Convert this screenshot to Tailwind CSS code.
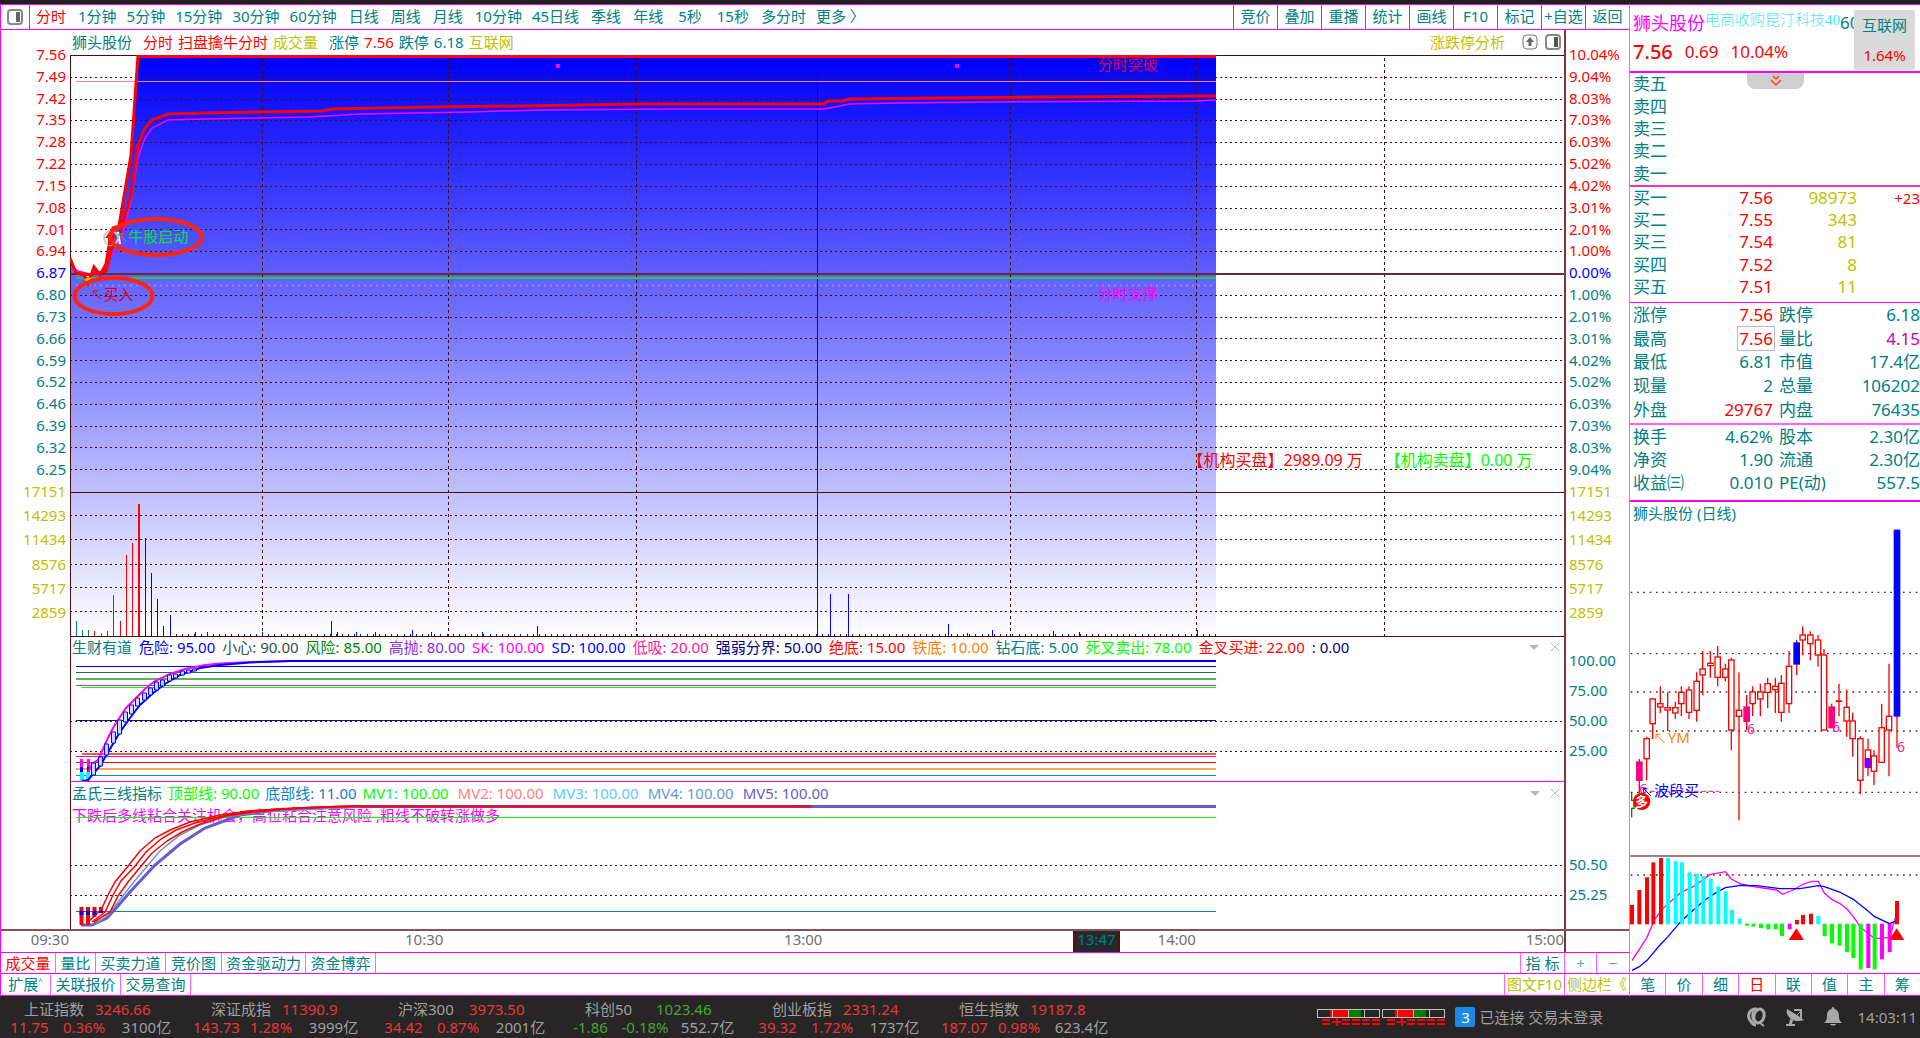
<!DOCTYPE html>
<html lang="zh-CN">
<head>
<meta charset="utf-8">
<meta name="viewport" content="width=device-width, initial-scale=1">
<title>狮头股份 分时</title>
<script src="https://cdn.jsdelivr.net/npm/@tailwindcss/browser@4"></script>
</head>
<body class="min-h-screen flex flex-col bg-white font-['Noto_Sans','Noto_Sans_CJK_SC',sans-serif] text-[15px] leading-[20px] text-[#008080] whitespace-nowrap overflow-x-hidden">
<div class="h-1 bg-[#1f1f1f]"></div>

<div class="flex items-stretch">
  <!-- chart side -->
  <main class="flex-1 min-w-0 flex flex-col border-l border-[#ff00ff] ">
    <nav class="h-[26px] flex items-stretch border-y border-[#ff00ff]" aria-label="周期">
      <button class="w-[29px] flex items-center justify-center border-r border-[#ff00ff]" aria-label="侧栏">
        <svg class="size-4" viewBox="0 0 16 16" fill="none"><rect x="1" y="1" width="14" height="14" rx="3" stroke="#888" stroke-width="2"/><rect x="9" y="3" width="4" height="10" fill="#666"/></svg>
      </button>
      <div class="flex items-center gap-3 pl-[6px] pb-[2px]">
        <button class="text-[#ff0000]">分时</button>
        <div class="flex gap-[10px]"><button>1分钟</button><button>5分钟</button><button>15分钟</button><button>30分钟</button><button>60分钟</button></div>
        <button>日线</button><button>周线</button><button>月线</button>
        <div class="flex gap-[10px]"><button>10分钟</button><button>45日线</button></div>
        <button>季线</button>
        <div class="flex gap-[15px]"><button>年线</button><button>5秒</button><button>15秒</button></div>
        <div class="flex gap-[10px]"><button>多分时</button><button>更多 〉</button></div>
      </div>
      <div class="ml-auto flex [&>button]:w-11 [&>button]:pb-[2px] [&>button]:border-l [&>button]:border-[#ff00ff] [&>button]:text-center">
        <button>竞价</button><button>叠加</button><button>重播</button><button>统计</button><button>画线</button><button>F10</button><button>标记</button><button>+自选</button><button>返回</button>
      </div>
    </nav>

    <section class="flex h-[899px]">
      <!-- left axis -->
      <div class="w-[69px] pt-[14px] pr-1 text-right">
        <div id="priceAxis" class="h-[435px] flex flex-col justify-between"></div>
        <div class="mt-[2px] h-[141px] flex flex-col justify-between text-[#c0c000]"><span>17151</span><span>14293</span><span>11434</span><span>8576</span><span>5717</span><span>2859</span></div>
      </div>

      <div class="flex-1 min-w-0 flex flex-col border-r-2 border-[#7a3838]">
        <div class="h-[25px] flex items-center gap-[5px] pl-[2px] pr-[3px] pb-[2px]">
          <span>狮头股份</span><span class="ml-[6px] text-[#ff0000]">分时</span><span class="text-[#ff0000]">扫盘擒牛分时</span><span class="text-[#c0c000]">成交量</span>
          <span class="ml-[6px]">涨停</span><span class="text-[#ff0000]">7.56</span><span>跌停</span><span>6.18</span><span class="text-[#c0c000]">互联网</span>
          <a href="#" class="ml-auto text-[#c0c000]">涨跌停分析</a>
          <button class="ml-3" aria-label="上移"><svg class="size-4" viewBox="0 0 16 16" fill="none"><rect x="1" y="1" width="14" height="14" rx="4" stroke="#777"/><path d="M8 3 12 8H9.500v4h-3V8H4z" fill="#666"/></svg></button>
          <button class="ml-[2px]" aria-label="侧栏"><svg class="size-4" viewBox="0 0 16 16" fill="none"><rect x="1" y="1" width="14" height="14" rx="3" stroke="#888" stroke-width="2"/><rect x="9" y="3" width="4" height="10" fill="#555"/></svg></button>
        </div>

        <!-- price and volume -->
        <div class="relative h-[581px]">
          <svg id="pricePane" class="block w-full h-full [&_*]:[vector-effect:non-scaling-stroke]" viewBox="70 55 1494 581" preserveAspectRatio="none" fill="none">
            <defs><linearGradient id="sky" gradientUnits="userSpaceOnUse" x1="0" y1="60" x2="0" y2="636"><stop offset="0" stop-color="#0000ff"/><stop offset="1" stop-color="#ffffff"/></linearGradient></defs>
            <path fill="url(#sky)" d="M70 258 76 275 86 276 88 284 94 268 100 276 106 264 111 233 119 225 121 214 131 155 138 55H1216V636H70Z"/>
            <g id="grid" stroke="#4a0a0a" shape-rendering="crispEdges"></g>
            <path stroke="#6b2a3a" stroke-width="2" d="M70 274H1565" shape-rendering="crispEdges"/>
            <path stroke="#22cc44" stroke-width="2" d="M76 278H1216" shape-rendering="crispEdges"/>
            <path stroke="#a080ff" stroke-width="2" stroke-dasharray="2 4" d="M76 285.500H1216"/>
            <path stroke="#ff8090" d="M76 81.500H1216" shape-rendering="crispEdges"/>
            <path stroke="#ff0020" stroke-width="3" d="M138 56.500H1216"/>
            <g id="volume" shape-rendering="crispEdges"></g>
            <path stroke="#ff00ff" stroke-width="1.500" d="M74 268 78 271 90 274 105 272 112 255 119 250 131 200 138 157 145 138 152 128 168 120 205 119 260 118 310 117 360 114 470 112 540 110 670 109 824 109 840 106 849 104 900 103 990 102 1195 101 1216 100"/>
            <path stroke="#ff0000" stroke-width="3" d="M76 273 90 275 106 271 112 248 118 240 125 215 131 195 138 145 145 128 152 120 168 114 205 113 260 112 322 111 332 109 432 107 520 106 640 104 824 104 828 101 842 101 849 99 945 98 1050 97 1216 96"/>
            <path stroke="#ff0000" stroke-width="3" d="M70 258 76 273 84 275 88 284 94 267 100 275 106 264 111 233 113 228 119 226 121 214 131 155 138 55"/>
            <circle cx="111" cy="238" r="7" stroke="#ccc" stroke-width="2"/><path fill="#ff0000" d="M111 230 117 238H114V245H108V238H105Z"/><path d="m118 232 2 12" stroke="#fff" stroke-width="2"/>
            <path d="m84 279 4 5 4-7z" fill="#cc0" /><path stroke="#22cc44" d="m126 241-8-7m0 5v-5h5"/>
            <path stroke="#e00020" d="m101 299-8-8m0 5v-5h5"/>
            <ellipse cx="156" cy="237" rx="46" ry="18" stroke="#ff2410" stroke-width="4"/>
            <ellipse cx="113.500" cy="296" rx="39" ry="18" stroke="#ff2410" stroke-width="4"/>
            <path fill="#ff00ff" d="M556 64h4v4h-4zM955 64h4v4h-4z"/>
          </svg>
          <span class="absolute left-[3.900%] top-[171px] text-[#00e040]">牛股启动</span>
          <span class="absolute left-[2.250%] top-[229px] text-[#e00020]">买入</span>
          <span class="absolute left-[68.800%] top-[-1px] text-[#e00030]">分时突破</span>
          <span class="absolute left-[68.800%] top-[228px] text-[#ff00ff]">分时支撑</span>
          <span class="absolute left-[74.800%] top-[395px] text-[16px] text-[#ff0000]">【机构买盘】2989.09 万</span>
          <span class="absolute left-[88%] top-[395px] text-[16px] text-[#00ff00]">【机构卖盘】0.00 万</span>
        </div>

        <!-- indicator 1 -->
        <div class="relative h-[145px] border-l border-[#5a0f0f]">
          <svg class="absolute inset-0 w-full h-full [&_*]:[vector-effect:non-scaling-stroke]" viewBox="71 636 1493 145" preserveAspectRatio="none" fill="none">
            <g stroke="#4a0a0a" shape-rendering="crispEdges"><path d="M70 636.500H1565"/><path stroke-dasharray="2 3" d="M70 721.500H1565M70 751.500H1565"/></g>
            <g shape-rendering="crispEdges">
              <path stroke="#0000ff" d="M76 666.500H1216"/><path stroke="#2f6060" d="M76 672.500H1216"/><path stroke="#5fb05f" stroke-width="2" d="M76 679H1216"/>
              <path stroke="#a040f0" d="M76 685.500H1216"/><path stroke="#00ff00" d="M82 687.500H1216"/><path stroke="#101080" d="M76 720.500H1216"/>
              <path stroke="#ff5050" stroke-width="2" d="M82 754H1216"/><path stroke="#ff1493" d="M76 756.500H1216"/><path stroke="#ff0000" d="M76 762.500H1216"/>
              <path stroke="#ffa850" stroke-width="2" d="M76 769H1216"/><path stroke="#209090" d="M76 775.500H1216"/>
              <path stroke="#0000ff" stroke-width="2" d="M288 661H1216"/>
              <path stroke="#ff00ff" stroke-width="3" d="M81.500 759V767M88 759V767"/><path stroke="#0000ff" stroke-width="3" d="M81.500 767V772M88 767V772"/><path stroke="#00ffff" stroke-width="4" d="M81.500 772V781M88 772V781"/>
            </g>
            <path stroke="#ff00ff" stroke-width="2" d="M88 772 93 763 98 760 107 740 113 728 120 717 126 708 135 699 145 689 155 681 170 674 185 669 205 665 220 663.500 250 662 290 661"/>
            <path stroke="#0000ff" stroke-width="2" d="M82 781 88 780 100 766 110 749 120 732 130 718 140 705 152 694 165 684 180 675 200 668 220 665 250 662.500 290 661"/>
            <g id="boxes" stroke="#0000ff" fill="#c8d8ff"></g>
          </svg>
          <div class="relative h-6 flex items-center gap-[7px] pl-px pr-1 pb-[2px]">
            <span>生财有道</span><span class="text-[#0000ff]">危险: 95.00</span><span class="text-[#2f4f4f]">小心: 90.00</span><span class="text-[#008000]">风险: 85.00</span><span class="text-[#8a2be2]">高抛: 80.00</span><span class="text-[#ff00ff]">SK: 100.00</span><span class="text-[#0000ff]">SD: 100.00</span><span class="text-[#ff1493]">低吸: 20.00</span><span class="text-[#000080]">强弱分界: 50.00</span><span class="text-[#ff0000]">绝底: 15.00</span><span class="text-[#ff8000]">铁底: 10.00</span><span>钻石底: 5.00</span><span class="text-[#00ff00]">死叉卖出: 78.00</span><span class="text-[#ff0000]">金叉买进: 22.00</span><span class="text-[#000080]">: 0.00</span>
            <button class="ml-auto" aria-label="菜单"><svg class="w-[10px] h-[10px]" viewBox="0 0 10 10"><path fill="#b8b8b8" d="M0 3h10L5 8z"/></svg></button>
            <button class="ml-1" aria-label="关闭"><svg class="w-[10px] h-[10px]" viewBox="0 0 10 10"><path stroke="#b8b8b8" d="m1 1 8 8m0-8L1 9"/></svg></button>
          </div>
        </div>

        <!-- indicator 2 -->
        <div class="relative h-[148px] border-l border-t border-l-[#5a0f0f] border-t-[#ff00ff]">
          <div class="relative h-6 flex items-center gap-[6px] pl-px pr-1 pb-[2px]">
            <span>孟氏三线指标</span><span class="text-[#00ff00]">顶部线: 90.00</span><span class="text-[#1080c0]">底部线: 11.00</span>
            <div class="flex gap-[9px]"><span class="text-[#00ff00]">MV1: 100.00</span><span class="text-[#ff8080]">MV2: 100.00</span><span class="text-[#60c8ff]">MV3: 100.00</span><span class="text-[#6699cc]">MV4: 100.00</span><span class="text-[#6a5acd]">MV5: 100.00</span></div>
            <button class="ml-auto" aria-label="菜单"><svg class="w-[10px] h-[10px]" viewBox="0 0 10 10"><path fill="#b8b8b8" d="M0 3h10L5 8z"/></svg></button>
            <button class="ml-1" aria-label="关闭"><svg class="w-[10px] h-[10px]" viewBox="0 0 10 10"><path stroke="#b8b8b8" d="m1 1 8 8m0-8L1 9"/></svg></button>
          </div>
          <p class="-mt-px pl-px text-[#ff00ff]">下跌后多线粘合关注机会，高位粘合注意风险 ,粗线不破转涨做多</p>
          <svg class="absolute inset-0 w-full h-full [&_*]:[vector-effect:non-scaling-stroke]" viewBox="71 782 1493 147" preserveAspectRatio="none" fill="none">
            <g shape-rendering="crispEdges"><path stroke="#4a0a0a" stroke-dasharray="2 3" d="M70 865.500H1565M70 895.500H1565"/>
            <path stroke="#00ff00" d="M76 817.500H1216"/><path stroke="#1080b0" d="M76 911.500H1216"/></g>
            <path stroke="#6a5acd" stroke-width="3" d="M81 925H92L107 918 117 907 130 892 155 865 180 844 205 828 240 815 270 811 310 808 360 806.500H1216"/>
            <path stroke="#6699cc" stroke-width="1.500" d="M96 924 108 915 118 902 137 878 149 864 160 851 180 835 200 825 225 817 260 812 300 810 360 807"/>
            <path stroke="#ff0000" stroke-width="1.500" d="M88 922 101 910 108 895 115 882 129 865 140 851 155 838 170 830 190 822 220 815 250 811 300 808 360 806"/>
            <path stroke="#ff0000" stroke-width="1.500" d="M92 922 105 912 113 895 121 881 136 865 146 852 161 839 176 830 195 823 222 816 252 811 300 808"/>
            <path stroke="#ff0000" stroke-width="1.500" d="M94 922 110 912 118 896 128 882 142 865 152 853 167 841 182 832 200 824 226 816 254 812 300 808"/>
            <path stroke="#ff0000" stroke-width="2" d="M240 812 280 809 340 806.500H811"/>
            <path stroke="#00ff00" d="m88 920 8-9"/>
            <g stroke-width="4"><path stroke="#ff0000" d="M81.500 907V925M88 907V925M94.500 907V917M101 907V913"/><path stroke="#0000ff" d="M81.500 911V915M88 911V915M94.500 911V915M101 911V913"/></g>
          </svg>
        </div>
      </div>

      <!-- right axis -->
      <div class="w-[63px] pt-[14px] pl-[3px]">
        <div id="pctAxis" class="h-[435px] flex flex-col justify-between"></div>
        <div class="mt-[2px] h-[141px] flex flex-col justify-between text-[#c0c000]"><span>17151</span><span>14293</span><span>11434</span><span>8576</span><span>5717</span><span>2859</span></div>
        <div class="mt-[28px] h-[110px] flex flex-col justify-between"><span>100.00</span><span>75.00</span><span>50.00</span><span>25.00</span></div>
        <div class="mt-[94px] h-[50px] flex flex-col justify-between"><span>50.50</span><span>25.25</span></div>
      </div>
    </section>

    <!-- time axis -->
    <div class="h-[23px] flex border-t-2 border-[#8a5050] text-[#6e6e6e] leading-[17px]">
      <div class="relative flex-1 border-r-2 border-[#7a3838]">
        <span class="absolute left-[1.900%]">09:30</span><span class="absolute left-[25.850%]">10:30</span><span class="absolute left-[50.100%]">13:00</span>
        <span class="absolute left-[68.600%] h-[21px] px-[2px] bg-[#25292f] border-x-2 border-[#5a0f0f] text-[#008080]">13:47</span>
        <span class="absolute left-[74%]">14:00</span><span class="absolute right-0">15:00</span>
      </div>
      <div class="w-[63px]"></div>
    </div>

    <div class="h-[21px] flex border-t border-[#ff00ff] [&>button]:border-r [&>button]:border-[#ff60ff]">
      <button class="w-[55px] text-[#ff0000]">成交量</button><button class="w-10">量比</button><button class="w-[70px]">买卖力道</button><button class="w-14">竞价图</button><button class="w-[84px]">资金驱动力</button><button class="w-[70px]">资金博弈</button>
      <button class="ml-auto w-[45px] border-l">指 标</button><button class="w-8 text-[#60a0a0]">+</button><button class="w-8 text-[#60a0a0] border-r-0!">−</button>
    </div>
    <div class="h-[23px] flex border-y border-[#ff00ff] [&>button]:pb-px [&>button]:border-r [&>button]:border-[#ff60ff]">
      <button class="w-[50px]">扩展˄</button><button class="w-[70px]">关联报价</button><button class="w-[70px]">交易查询</button>
      <button class="ml-auto w-[61px] border-l text-[#c0c000]">图文F10</button><button class="w-16 pl-[2px] text-left border-r-0! text-[#c0c000] overflow-hidden">侧边栏《</button>
    </div>
  </main>

  <!-- quote side -->
  <aside class="w-[291px] shrink-0 flex flex-col border-l border-[#ff60ff] overflow-hidden">
    <header class="relative h-[69px] border-t border-b-2 border-[#ff00ff] pl-[3px]">
      <div class="h-[35px] flex items-center overflow-hidden"><h1 class="text-[18px] text-[#ff00ff]">狮头股份</h1><span class="pb-[6px] font-['Liberation_Serif','Noto_Sans_CJK_SC',serif] font-light text-[#40e8f8]">电商收购昆汀科技40</span><span class="text-[17px]">60</span></div>
      <div class="flex items-center gap-3 text-[17px] text-[#ff0000] leading-6"><b class="text-[20px] font-medium">7.56</b><span>0.69</span><span>10.04%</span></div>
      <a href="#" class="absolute right-[5px] top-[5px] w-[61px] h-[60px] bg-[#dadada] flex flex-col items-center justify-between pt-[5px] pb-[5px]"><span>互联网</span><span class="text-[#ff0000]">1.64%</span></a>
    </header>
    <div class="relative h-[114px] border-b-2 border-[#ff30b0] text-[17px]">
      <table class="w-full h-full"><tbody><tr><th class="font-normal text-left pl-[3px]">卖五</th></tr><tr><th class="font-normal text-left pl-[3px]">卖四</th></tr><tr><th class="font-normal text-left pl-[3px]">卖三</th></tr><tr><th class="font-normal text-left pl-[3px]">卖二</th></tr><tr><th class="font-normal text-left pl-[3px]">卖一</th></tr></tbody></table>
      <button class="absolute left-[117px] top-0 w-[57px] h-4 rounded-b-lg bg-[#cfcfcf] flex justify-center pt-[2px]" aria-label="展开"><svg class="w-3 h-3" viewBox="0 0 12 12" fill="none" stroke="#ff4040" stroke-width="1.500"><path d="m3 1 3 3 3-3M1 5l5 5 5-5"/></svg></button>
    </div>
    <div class="h-[116px] pb-1 border-b border-[#ff00ff] text-[17px]">
      <table id="bids" class="w-full h-full table-fixed"></table>
    </div>
    <div class="h-[122px] pb-px border-b-2 border-[#ff60ff] text-[17px]"><table id="statsA" class="w-full h-full table-fixed"></table></div>
    <div class="h-[77px] pb-[5px] border-b-2 border-[#ff00ff] text-[17px]"><table id="statsB" class="w-full h-full table-fixed"></table></div>
    <div class="relative h-[353px]">
      <h2 class="absolute left-[3px] top-[1px]">狮头股份 (日线)</h2>
      <svg id="daily" class="block w-full h-full" viewBox="90 7 870 1059" preserveAspectRatio="none" fill="none"></svg>
    </div>
    <div class="h-[118px]">
      <svg id="macd" class="block w-full h-full" viewBox="390 75 870 354" preserveAspectRatio="none" fill="none"></svg>
    </div>
    <nav class="h-[23px] flex border-y border-[#ff00ff] [&>button]:flex-1 [&>button]:pb-px [&>button]:border-r [&>button]:border-[#ff60ff]">
      <button>笔</button><button>价</button><button>细</button><button class="text-[#ff0000]">日</button><button>联</button><button>值</button><button>主</button><button class="border-r-0!">筹</button>
    </nav>
  </aside>
</div>

<footer class="flex-1 min-h-[42px] flex items-center bg-[#272525] text-[#a0a0a0]">
  <div id="indices" class="flex h-[42px] pt-1 leading-[18px]"></div>
  <div class="ml-auto flex items-center">
    <svg class="w-[129px] h-[18px] mr-[9px]" viewBox="0 0 129 18" fill="none" shape-rendering="crispEdges">
      <g id="sig"><path fill="#ff0000" d="M13 2h18v7H13z"/><path fill="#008000" d="M31 2h13v7H31z"/><path stroke="#c0c0c0" d="M.5 1.500h62v8H.5zM15.500 2v7M31.500 2v7M47.500 2v7"/><path stroke="#ff0000" stroke-width="2" d="M5 12h8M5 16h8M25 12h8M25 16h8M35 12h8M35 16h8M45 12h8M45 16h8M55 12h8M55 16h8M19.500 10v8M15 14h9"/></g>
      <use href="#sig" x="65"/>
    </svg>
    <span class="size-5 rounded-xs bg-[#1e88e5] text-white text-center">3</span>
    <span class="ml-1 w-[268px]">已连接 交易未登录</span>
    <button aria-label="客服"><svg class="size-5" viewBox="0 0 20 20" fill="none" stroke="#a8a8a8"><ellipse cx="12" cy="9" rx="5" ry="7" stroke-width="3" transform="rotate(15 12 9)"/><path d="M10 2C2 1 0 9 3 13c2 3 3 5 6 5" stroke-width="3"/><path d="M7 3C4 8 5 13 9 16" stroke-width="2"/><path d="m13 16 4 3" stroke-width="2"/></svg></button>
    <button class="ml-[18px]" aria-label="信号"><svg class="size-5" viewBox="0 0 20 20" fill="#a8a8a8"><path d="M2 2C0 9 8 17 19 13L12 8z"/><path d="M5 12 4 17H1v2h9v-2H7l1-4zM9 2h8v9h-2V4H9z"/><path d="m12 8 4-4" stroke="#a8a8a8"/></svg></button>
    <button class="ml-[18px]" aria-label="通知"><svg class="size-5" viewBox="0 0 20 20" fill="#a8a8a8"><path d="M10 0c1 0 1.500.8 1.500 2C15 3 16 6 16 9c0 4 1 5 3 7H1c2-2 3-3 3-7 0-3 1-6 4.500-7C8.500.8 9 0 10 0zM7 17h6c0 2-6 2-6 0z"/></svg></button>
    <time class="ml-[14px] mr-[3px]">14:03:11</time>
  </div>
</footer>

<script>
const $ = id => document.getElementById(id);
const NS = '#ff0000', TEAL = '#008080';

// axis labels
const prices = '7.56 7.49 7.42 7.35 7.28 7.22 7.15 7.08 7.01 6.94 6.87 6.80 6.73 6.66 6.59 6.52 6.46 6.39 6.32 6.25'.split(' ');
const pcts = '10.04 9.04 8.03 7.03 6.03 5.02 4.02 3.01 2.01 1.00 0.00 1.00 2.01 3.01 4.02 5.02 6.03 7.03 8.03 9.04'.split(' ');
const tone = i => i < 10 ? 'text-[#ff0000]' : i === 10 ? 'text-[#0000ff]' : 'text-[#008080]';
$('priceAxis').innerHTML = prices.map((p, i) => `<span class="${tone(i)}">${p}</span>`).join('');
$('pctAxis').innerHTML = pcts.map((p, i) => `<span class="${tone(i)}">${p}%</span>`).join('');

// grid lines
let rows = '';
for (let i = 1; i < 20; i++) if (i !== 10) rows += `M70 ${Math.floor(55.5 + 21.8 * i) + .5}H1565`;
[515.5, 539.5, 564.5, 587.5, 611.5].forEach(y => rows += `M70 ${y}H1565`);
let cols = [262.5, 448.5, 636.5, 1010.5, 1196.5, 1384.5].map(x => `M${x} 58V636`).join('');
$('grid').innerHTML = `<path stroke-dasharray="2 3" d="${rows}"/><path stroke-dasharray="3 3" d="${cols}"/><path d="M70 55.5H1565M70 492.5H1565M817.5 55V636M70.5 55V636"/>`;

// volume bars: x, top, colour
const T = TEAL, R = NS, B = '#0000ff';
const vol = [[76,621,T],[82,630,T],[88,630,T],[94,631,R],[101,633,T],[107,631,R],[113,595,R],[120,621,R],[126,555,R],[132,543,R],[138,504,R],[145,538,B],[151,573,B],[157,599,B],[163,626,B],[170,615,B],[195,632,B],[207,632,B],[262,632,B],[331,621,B],[337,632,B],[356,632,B],[375,632,B],[412,630,B],[431,632,B],[482,632,B],[537,626,B],[830,594,B],[848,594,B],[948,624,B],[967,633,B],[992,630,B],[1053,631,B],[1079,632,B],[1197,630,B]];
let ticks = '';
for (let x = 176; x < 1216; x += 6.15) ticks += `M${Math.round(x) + .5} 634V636`;
$('volume').innerHTML = vol.map(v => `<path stroke="${v[2]}" stroke-width="${v[0] === 138 ? 2 : 1}" d="M${v[0] + .5} ${v[1]}V636"/>`).join('') + `<path stroke="#0000ff" d="${ticks}"/>`;

// boxes between the two indicator curves
const box = [[93,763,775],[100,757,766],[106,744,755],[113,732,743],[119,720,734],[125,712,722],[131,705,714],[137,698,706],[144,693,700],[150,688,695],[156,682,690],[162,680,686],[169,675,681],[175,674,678],[182,671,675],[188,670,673],[194,669,671]];
$('boxes').innerHTML = box.map(b => `<rect x="${b[0] - 1.5}" y="${b[1]}" width="4" height="${b[2] - b[1]}"/>`).join('');

// order book
$('bids').innerHTML = '<tbody>' + [['买一','7.56','98973','+23'],['买二','7.55','343',''],['买三','7.54','81',''],['买四','7.52','8',''],['买五','7.51','11','']]
  .map(r => `<tr><th class="w-[60px] pl-[3px] text-left font-normal">${r[0]}</th><td class="w-[83px] text-right text-[#ff0000]">${r[1]}</td><td class="w-[84px] text-right text-[#c0c000]">${r[2]}</td><td class="text-right text-[15px] text-[#ff0000]">${r[3]}</td></tr>`).join('') + '</tbody>';

// statistics
const stat = r => `<tr><th class="w-[60px] pl-[3px] text-left font-normal">${r[0]}</th><td class="w-[83px] text-right ${r[4] || ''}">${r[1]}</td><th class="w-[58px] pl-[6px] text-left font-normal">${r[2]}</th><td class="text-right ${r[5] || ''}">${r[3]}</td></tr>`;
$('statsA').innerHTML = '<tbody>' + [['涨停','7.56','跌停','6.18','text-[#ff0000]'],['最高','<span class="-mr-px px-px outline outline-[#bbbbbb]">7.56</span>','量比','4.15','text-[#ff0000]','text-[#c000c0]'],['最低','6.81','市值','17.4亿'],['现量','2','总量','106202'],['外盘','29767','内盘','76435','text-[#ff0000]']].map(stat).join('') + '</tbody>';
$('statsB').innerHTML = '<tbody>' + [['换手','4.62%','股本','2.30亿'],['净资','1.90','流通','2.30亿'],['收益㈢','0.010','PE(动)','557.5']].map(stat).join('') + '</tbody>';

// daily candles: x, high, open, close, low, fill
const P = '#ff0080';
const candles = [[118,778,787,842,880,P],[140,711,717,777,842],[158,596,598,672,718],[181,560,612,622,640],[203,578,624,631,694],[226,606,624,640,658],[244,560,578,612,650],[267,560,571,638,658],[290,518,545,632,666],[308,454,508,526,587],[331,454,491,498,534],[353,439,472,533,560],[376,492,508,533,545],[394,474,481,691,752],[417,518,632,650,962],[440,586,622,665,692,P],[458,560,577,612,650],[481,552,577,598,650],[503,534,552,578,626],[526,534,560,570,640],[544,526,551,638,666],[567,454,500,612,640],[590,421,430,493,527,B],[608,380,406,421,467],[631,395,406,432,482],[654,406,421,466,501],[672,448,466,691,691],[695,612,622,684,684,P],[717,552,604,605,650],[740,570,623,664,711],[758,639,664,717,771],[781,710,717,842,884],[804,717,751,800,830],[804,780,777,803,800,'#8000ff'],[822,752,769,815,857],[845,612,684,788,788],[867,492,650,691,830],[891,90,92,649,744,B]];
const six = (x, y) => `<text x="${x}" y="${y}" font-size="42" fill="#ff1493">6</text>`;
$('daily').innerHTML = `<path stroke="#5a2020" stroke-width="4" stroke-dasharray="5 14" d="M92 278H960M92 462H960M92 577H960M92 694H960M92 878H960"/>` +
  candles.map(c => `<path stroke="#ff0000" stroke-width="4" d="M${c[0]} ${c[1]}V${c[4]}"/><rect x="${c[0] - 8}" y="${c[2]}" width="16" height="${c[3] - c[2]}" fill="${c[5] || '#fff'}" stroke="${c[5] || NS}" stroke-width="4"/>`).join('') +
  six(441, 704) + six(696, 696) + six(891, 756) + six(118, 884) +
  `<path stroke="#ff8000" stroke-width="3" d="M194 730 168 704m0 14v-14h14"/><text x="203" y="731" font-size="45" fill="#ff8000">YM</text>
   <path stroke="#008000" stroke-width="4" d="M95 878V902H108M95 953V926H102V910"/>
   <path stroke="#ff1493" stroke-width="3" stroke-dasharray="14 8" d="M150 875H357"/><path stroke="#0000ff" stroke-width="3" d="M152 888 130 866m0 12v-12h12"/><text x="162" y="889" font-size="45" fill="#0000ff">波段买</text>
   <circle cx="125" cy="905" r="26" fill="#ff0000"/><text x="106" y="920" font-size="38" font-weight="700" fill="#fff">多</text>`;

// MACD bars: x, y from, y to, colour
const C = '#00ffff', G = '#00ff00', M = '#ff00ff';
const bars = [[396,225,283,R],[418,180,283,R],[441,142,283,R],[460,97,283,R],[483,84,283,R],[504,84,283,C],[527,94,283,C],[546,97,283,C],[569,127,283,C],[590,131,283,C],[610,138,283,C],[632,146,283,C],[655,169,283,C],[677,184,283,C],[696,240,283,C],[719,266,283,C],[741,281,287,G],[760,281,290,G],[783,281,294,G],[805,281,298,G],[827,281,298,G],[846,281,318,G],[869,281,298,M],[891,270,283,R],[909,255,283,R],[933,251,283,R],[955,258,283,C],[974,281,318,G],[996,281,340,G],[1019,281,347,G],[1041,281,366,G],[1060,281,384,G],[1082,281,418,G],[1105,281,414,M],[1124,281,418,G],[1146,281,388,M],[1169,281,366,M],[1191,213,283,R]];
$('macd').innerHTML = `<path stroke="#8a5050" stroke-width="4" d="M390 78H1260"/><path stroke="#5a2020" stroke-width="4" stroke-dasharray="5 14" d="M392 135H1260"/>
  <path stroke="#ff00ff" stroke-width="4" d="M396 392 441 322 463 270 486 238 542 188 580 170 630 134 676 125 694 147 722 162 760 170 830 180 848 193 880 180 910 162 935 154 955 154 973 189 995 208 1019 220 1041 237 1060 260 1082 292 1124 326 1169 322 1190 250"/>
  <path stroke="#0000ff" stroke-width="4" d="M396 421 418 410 441 391 480 345 504 320 542 275 580 240 615 210 645 190 676 173 722 166 770 167 840 176 900 176 955 167 973 170 1019 186 1060 208 1105 244 1124 260 1169 281 1190 272"/>` +
  bars.map(b => `<path stroke="${b[3]}" stroke-width="12" d="M${b[0]} ${b[1]}V${b[2]}"/>`).join('') +
  `<path fill="#ff0000" d="M889 295 912 330H866zM1190 295 1213 330H1167z"/>`;

// index ticker
const idx = [['上证指数','3246.66','11.75','0.36%','3100亿'],['深证成指','11390.9','143.73','1.28%','3999亿'],['沪深300','3973.50','34.42','0.87%','2001亿'],['科创50','1023.46','-1.86','-0.18%','552.7亿'],['创业板指','2331.24','39.32','1.72%','1737亿'],['恒生指数','19187.8','187.07','0.98%','623.4亿']];
$('indices').innerHTML = idx.map(r => {
  const c = r[2][0] === '-' ? 'text-[#45a82f]' : 'text-[#e83838]';
  return `<div class="w-[187px] text-center"><div class="flex pl-6 text-left"><span class="w-[71px]">${r[0]}</span><span class="${c}">${r[1]}</span></div><div class="flex"><span class="w-[59px] ${c}">${r[2]}</span><span class="w-[50px] ${c}">${r[3]}</span><span class="w-[75px]">${r[4]}</span></div></div>`;
}).join('');
</script>
</body>
</html>
